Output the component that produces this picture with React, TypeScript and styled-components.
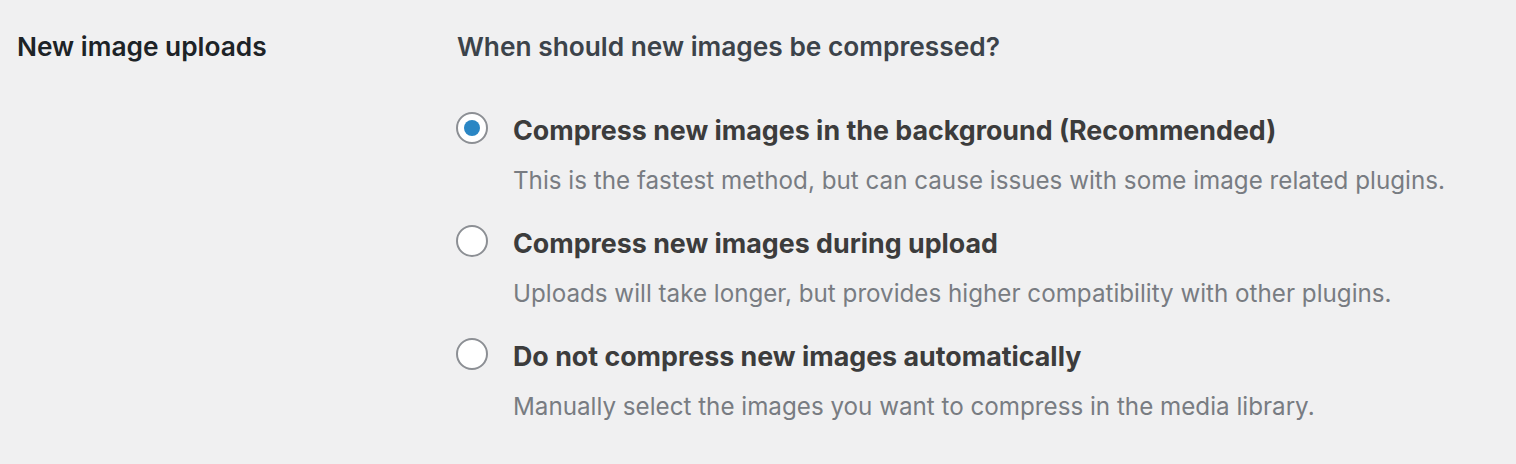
import React from "react";
import styled, { createGlobalStyle } from "styled-components";

const Global = createGlobalStyle`
  html, body { margin: 0; padding: 0; background: #f0f0f1; }
  body { font-family: Inter, "Noto Sans", "Liberation Sans", sans-serif; }
`;

const Page = styled.div`
  display: grid;
  grid-template-columns: 440px 1fr;
  padding: 29px 0 0 17px;
  box-sizing: border-box;
  width: 1516px;
  height: 464px;
`;

const RowLabel = styled.div`
  font-size: 26.3px;
  font-weight: 600;
  color: #1d2327;
  line-height: 36px;
`;

const Content = styled.div`
  display: flex;
  flex-direction: column;
`;

const Question = styled.div`
  font-size: 26.3px;
  font-weight: 600;
  color: #3c434a;
  line-height: 36px;
  margin-bottom: 47px;
`;

const Options = styled.div`
  display: flex;
  flex-direction: column;
  gap: 26px;
`;

const Option = styled.label`
  display: grid;
  grid-template-columns: 32px 1fr;
  column-gap: 24px;
  align-items: center;
`;

const Radio = styled.span<{ $checked?: boolean }>`
  width: 32px;
  height: 32px;
  box-sizing: border-box;
  border-radius: 50%;
  border: 2px solid #8c8f94;
  background: #fff;
  display: flex;
  align-items: center;
  justify-content: center;
  margin: -5px 0 0 -1px;
  &::after {
    content: "";
    width: 16px;
    height: 16px;
    border-radius: 50%;
    background: #2a86c4;
    display: ${(p) => (p.$checked ? "block" : "none")};
  }
`;

const Title = styled.span`
  font-size: 26.8px;
  font-weight: 700;
  color: #3c3c3c;
  line-height: 36px;
`;

const Desc = styled.span`
  grid-column: 2;
  font-size: 24.2px;
  font-weight: 400;
  color: #787c82;
  line-height: 36px;
  margin-top: 15px;
`;

const options = [
  {
    title: "Compress new images in the background (Recommended)",
    desc: "This is the fastest method, but can cause issues with some image related plugins.",
    checked: true,
  },
  {
    title: "Compress new images during upload",
    desc: "Uploads will take longer, but provides higher compatibility with other plugins.",
    checked: false,
  },
  {
    title: "Do not compress new images automatically",
    desc: "Manually select the images you want to compress in the media library.",
    checked: false,
  },
];

export default function App() {
  return (
    <>
      <Global />
      <Page>
        <RowLabel>New image uploads</RowLabel>
        <Content>
          <Question>When should new images be compressed?</Question>
          <Options>
            {options.map((o) => (
              <Option key={o.title}>
                <Radio $checked={o.checked} />
                <Title>{o.title}</Title>
                <Desc>{o.desc}</Desc>
              </Option>
            ))}
          </Options>
        </Content>
      </Page>
    </>
  );
}
